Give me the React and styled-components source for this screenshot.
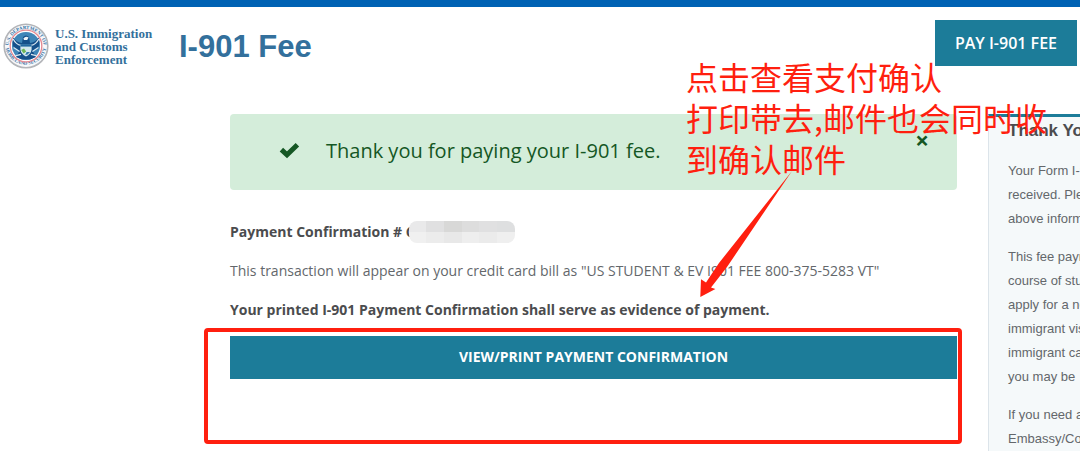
import styled, { createGlobalStyle } from 'styled-components';

const COLORS = {
  bar: '#0062b4',
  teal: '#1c7c99',
  logo: '#33709c',
  text: '#63676b',
  strong: '#4b4c4e',
  success: '#155724',
  marker: '#ff1f0f',
};

const ASIDE_PARAGRAPHS = [
  ['Your Form I-901', 'received. Please', 'above information'],
  ['This fee payment', 'course of study', 'apply for a new', 'immigrant visa', 'immigrant category', 'you may be'],
  ['If you need a', 'Embassy/Consulate'],
];

const NOTE_LINES = ['点击查看支付确认', '打印带去,邮件也会同时收', '到确认邮件'];

const MOSAIC = [
  '#e9e9ea', '#e0e0e1', '#d8d8d7', '#dddddd', '#e0e0e1', '#dedfe0',
  '#f0f0f0', '#ececec', '#e8e8e8', '#eeeeee', '#ebebeb', '#efefef',
];

export default function App() {
  return (
    <>
      <GlobalStyle />
      <Page>
        <Header>
          <Brand href="#home">
            <Seal />
            <Agency>
              U.S. Immigration
              <br />
              and Customs
              <br />
              Enforcement
            </Agency>
            <Title>I-901 Fee</Title>
          </Brand>
          <PayButton type="button">PAY I-901 FEE</PayButton>
        </Header>
        <Content>
          <main>
            <Alert role="alert">
              <Check />
              <AlertText>Thank you for paying your I-901 fee.</AlertText>
              <CloseButton type="button" aria-label="Close">×</CloseButton>
            </Alert>
            <Details>
              <Line $bold>
                Payment Confirmation # C
                <Mosaic>
                  {MOSAIC.map((color, idx) => (
                    <Cell key={idx} $color={color} />
                  ))}
                </Mosaic>
              </Line>
              <Line>
                This transaction will appear on your credit card bill as "US STUDENT &amp; EV I901 FEE 800-375-5283 VT"
              </Line>
              <Line $bold>Your printed I-901 Payment Confirmation shall serve as evidence of payment.</Line>
            </Details>
            <PrintArea>
              <PrintButton type="button">VIEW/PRINT PAYMENT CONFIRMATION</PrintButton>
              <Frame />
            </PrintArea>
          </main>
          <Aside>
            <AsideTitle>Thank You</AsideTitle>
            {ASIDE_PARAGRAPHS.map((lines) => (
              <AsideText key={lines[0]}>{lines.join('\n')}</AsideText>
            ))}
          </Aside>
        </Content>
        <Note>{NOTE_LINES.join('\n')}</Note>
        <Arrow />
      </Page>
    </>
  );
}

const Seal = () => (
  <svg width="46" height="46" viewBox="0 0 46 46" role="img" aria-label="Department of Homeland Security seal">
    <defs>
      <path id="ringTop" d="M6.2 29 A17.6 17.6 0 1 1 39.8 29" />
      <path id="ringBottom" d="M2.6 25 A20.8 20.8 0 0 0 43.4 25" />
    </defs>
    <circle cx="23" cy="23" r="21.8" fill="#f7f8fa" stroke="#b3b5b9" strokeWidth="1.6" />
    <g fill="#2f6fa3" fontFamily="Liberation Serif" fontWeight="700" fontSize="4.9" textAnchor="middle">
      <text>
        <textPath href="#ringTop" startOffset="50%">U.S. DEPARTMENT OF</textPath>
      </text>
      <text>
        <textPath href="#ringBottom" startOffset="50%">HOMELAND SECURITY</textPath>
      </text>
    </g>
    <circle cx="23" cy="23" r="15.8" fill="#fff" stroke="#e58a92" strokeWidth="1.3" />
    <circle cx="23" cy="23" r="14" fill="#3f86b8" />
    <path
      d="M10.4 14.6 Q14 20 19 20 L20 14 Q23 11 26 14 L27 20 Q32 20 35.6 14.6 Q37.6 20 35 25 L29.6 28 L33 34 L27 36.6 H19 L13 34 L16.4 28 L11 25 Q8.4 20 10.4 14.6 Z"
      fill="#15508a"
    />
    <path
      d="M10.2 16 Q13 21.6 18 22.4 M35.8 16 Q33 21.6 28 22.4 M10.6 24.6 L16.6 28.4 M35.4 24.6 L29.4 28.4 M13 32.6 L18 31.4 M33 32.6 L28 31.4"
      fill="none"
      stroke="#dbe9f2"
      strokeWidth="1.2"
    />
    <path d="M20.4 15.4 Q22.6 12.6 25.6 14.6 L24.2 17 H21 Z" fill="#eef4f8" />
    <path d="M17.4 21.4 H28.6 V26.4 Q28 31 23 33.4 Q18 31 17.4 26.4 Z" fill="#d3e8ee" />
    <path d="M17.4 21.2 H28.6 V23.6 H17.4 Z" fill="#2469a0" />
    <path d="M18.2 27 L21 25.4 L23.2 28.6 L20.6 30.6 Z" fill="#6cb556" />
    <path d="M23.6 29 H27 L24.6 31.6 L22.2 32 Z" fill="#2f78ad" />
  </svg>
);

const Check = () => (
  <svg width="22" height="18" viewBox="0 0 22 18" aria-hidden="true">
    <path d="M3.4 8.6 L9 13.8 L19.4 3.8" fill="none" stroke={COLORS.success} strokeWidth="5" />
  </svg>
);

const Arrow = () => (
  <ArrowSvg width="96" height="130" viewBox="0 0 96 130" aria-hidden="true">
    <path d="M96 1 L31 97 L15 117.4 L19.4 119 L4.3 127 L5 109.3 L10 112.4 L23 93 Z" fill={COLORS.marker} />
  </ArrowSvg>
);

const GlobalStyle = createGlobalStyle`
  * {
    box-sizing: border-box;
  }

  body {
    margin: 0;
    background: #fff;
    color: ${COLORS.text};
    font-family: 'Open Sans', sans-serif;
    overflow: hidden;
  }

  h1, h2, p {
    margin: 0;
  }

  button {
    border: 0;
    padding: 0;
    font-family: inherit;
    cursor: pointer;
  }
`;

const Page = styled.div`
  position: relative;
  border-top: 7px solid ${COLORS.bar};
  overflow: hidden;
`;

const Header = styled.header`
  display: flex;
  justify-content: space-between;
  align-items: flex-start;
  padding: 13px 3px 45px;
`;

const Brand = styled.a`
  display: flex;
  align-items: center;
  padding-top: 3px;
  color: ${COLORS.logo};
  text-decoration: none;
`;

const Agency = styled.span`
  width: 124px;
  margin-left: 6px;
  font: 700 13px/13px 'Liberation Serif', serif;
  white-space: nowrap;
`;

const Title = styled.h1`
  padding-top: 2px;
  font: 700 31px/44px 'Liberation Sans', sans-serif;
`;

const TealButton = styled.button`
  background: ${COLORS.teal};
  color: #fff;
`;

const PayButton = styled(TealButton)`
  height: 46px;
  padding: 0 20px;
  font-size: 16px;
  font-weight: 600;
`;

const Content = styled.div`
  display: grid;
  grid-template-columns: minmax(0, 1fr) 92px;
  column-gap: 31px;
  padding-left: 230px;
`;

const Alert = styled.div`
  display: flex;
  align-items: center;
  height: 76px;
  padding: 0 28px 4px 48px;
  border-radius: 4px;
  background: #d4edda;
  color: ${COLORS.success};
`;

const AlertText = styled.p`
  flex: 1;
  margin-left: 26px;
  font-size: 20px;
`;

const CloseButton = styled.button`
  align-self: flex-start;
  margin-top: 12px;
  background: none;
  color: ${COLORS.success};
  font-size: 24px;
  font-weight: 700;
  line-height: 28px;
`;

const Details = styled.div`
  display: flex;
  flex-direction: column;
  gap: 15px;
  padding: 30px 0 14px;
`;

const Line = styled.p`
  display: flex;
  align-items: center;
  color: ${({ $bold }) => ($bold ? COLORS.strong : COLORS.text)};
  font-size: 14px;
  font-weight: ${({ $bold }) => ($bold ? 700 : 400)};
  line-height: 24px;
  white-space: nowrap;
`;

const Mosaic = styled.span`
  display: grid;
  grid-template-columns: repeat(6, 1fr);
  width: 106px;
  height: 22px;
  margin-left: -6px;
  border-radius: 8px;
  overflow: hidden;
`;

const Cell = styled.span`
  background: ${({ $color }) => $color};
`;

const PrintArea = styled.div`
  position: relative;
  padding-bottom: 72px;
`;

const PrintButton = styled(TealButton)`
  display: block;
  width: 100%;
  height: 43px;
  padding-bottom: 2px;
  font-size: 14px;
  font-weight: 700;
`;

const Frame = styled.div`
  position: absolute;
  inset: -8px -5px auto -26px;
  height: 116px;
  border: 4px solid ${COLORS.marker};
  border-radius: 4px;
  pointer-events: none;
`;

const Aside = styled.aside`
  border-top: 3px solid ${COLORS.teal};
  border-left: 1px solid #dce4ea;
  padding: 2px 0 0 19px;
  background: #f5f9fa;
  overflow: hidden;
  white-space: pre;
  font-family: 'Liberation Sans', sans-serif;
`;

const AsideTitle = styled.h2`
  margin-bottom: 16px;
  color: ${COLORS.strong};
  font-size: 17px;
  line-height: 24px;
`;

const AsideText = styled.p`
  margin-bottom: 14px;
  font-size: 13px;
  line-height: 24px;
`;

const Note = styled.div`
  position: absolute;
  top: 49px;
  right: 33px;
  width: 361px;
  color: ${COLORS.marker};
  font: 400 32px/41px 'Noto Sans CJK SC', sans-serif;
  white-space: pre;
  pointer-events: none;
`;

const ArrowSvg = styled.svg`
  position: absolute;
  top: 163px;
  right: 288px;
  pointer-events: none;
`;
